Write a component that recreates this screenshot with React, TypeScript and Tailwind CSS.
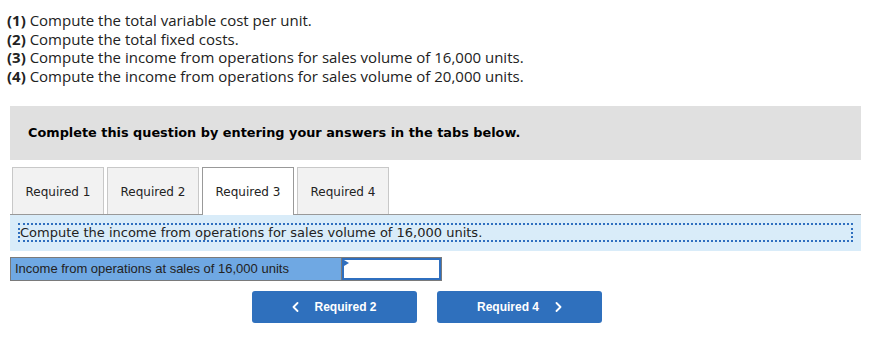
import React from "react";

const tabs = ["Required 1", "Required 2", "Required 3", "Required 4"];

function ChevLeft() {
  return (
    <svg width="7" height="10" viewBox="0 0 7 10" fill="none">
      <polyline points="5.5,1 1.5,5 5.5,9" stroke="white" strokeWidth="1.8" strokeLinecap="round" strokeLinejoin="round" />
    </svg>
  );
}
function ChevRight() {
  return (
    <svg width="7" height="10" viewBox="0 0 7 10" fill="none">
      <polyline points="1.5,1 5.5,5 1.5,9" stroke="white" strokeWidth="1.8" strokeLinecap="round" strokeLinejoin="round" />
    </svg>
  );
}

export default function App() {
  return (
    <div className="w-[874px] h-[344px] bg-white overflow-hidden">
      <div className="pl-[7px] pt-[11px] text-[15px] leading-[18.5px] text-[#222] [font-family:'Open_Sans',Arial,sans-serif]">
        <div><b>(1)</b> Compute the total variable cost per unit.</div>
        <div><b>(2)</b> Compute the total fixed costs.</div>
        <div><b>(3)</b> Compute the income from operations for sales volume of 16,000 units.</div>
        <div><b>(4)</b> Compute the income from operations for sales volume of 20,000 units.</div>
      </div>

      <div className="ml-[10px] w-[851px] mt-[21px] h-[54px] bg-[#e0e0e0] flex items-center pl-[18px] text-[12.85px] font-bold text-black [font-family:'DejaVu_Sans',Verdana,sans-serif]">
        Complete this question by entering your answers in the tabs below.
      </div>

      <div className="ml-[10px] w-[851px] mt-[7px] flex gap-[3px] pl-[2px] border-b border-[#999] h-[48px] items-end [font-family:'DejaVu_Sans',Verdana,sans-serif]">
        {tabs.map((t, i) =>
          i === 2 ? (
            <div
              key={t}
              className="w-[92px] h-[48px] -mb-px bg-white border border-b-0 border-[#999] flex items-center justify-center pt-[1px] text-[12px] text-[#222]"
            >
              {t}
            </div>
          ) : (
            <div
              key={t}
              className="w-[92px] h-[47px] bg-[#f2f2f2] border border-b-0 border-[#c8c8c8] flex items-center justify-center pt-[1px] text-[12px] text-[#222]"
            >
              {t}
            </div>
          )
        )}
      </div>

      <div className="ml-[10px] w-[851px] bg-[#d9ecf9] pt-[8px] pb-[9px] px-[8px]">
        <div className="h-[19px] border-2 border-dotted border-[#2f6fbf] flex items-center text-[13px] leading-[14px] text-[#222] [font-family:'DejaVu_Sans',Verdana,sans-serif]">
          Compute the income from operations for sales volume of 16,000 units.
        </div>
      </div>

      <div className="ml-[10px] mt-[6px] flex w-[432px] h-[24px] border border-[#7a7a7a] [font-family:'Liberation_Sans',Arial,sans-serif]">
        <div className="w-[331px] bg-[#6fa8e3] border-r border-[#7a7a7a] flex items-center pl-[4px] text-[13px] text-[#222]">
          Income from operations at sales of 16,000 units
        </div>
        <div className="relative flex-1 bg-white border-2 border-[#2f6fbf]">
          <div className="absolute left-0 top-0 w-0 h-0 border-t-[3px] border-b-[3px] border-l-[5px] border-t-transparent border-b-transparent border-l-[#2f6fbf]" />
        </div>
      </div>

      <div className="ml-[252px] mt-[10px] flex gap-[20px] [font-family:'Liberation_Sans',Arial,sans-serif]">
        <div className="w-[165px] h-[32px] rounded-[3px] bg-[#2f70bd] flex items-center justify-center gap-[15px] text-white text-[12px] font-bold">
          <ChevLeft />
          <span>Required 2</span>
        </div>
        <div className="w-[165px] h-[32px] rounded-[3px] bg-[#2f70bd] flex items-center justify-center gap-[16px] text-white text-[12px] font-bold">
          <span>Required 4</span>
          <ChevRight />
        </div>
      </div>
    </div>
  );
}
